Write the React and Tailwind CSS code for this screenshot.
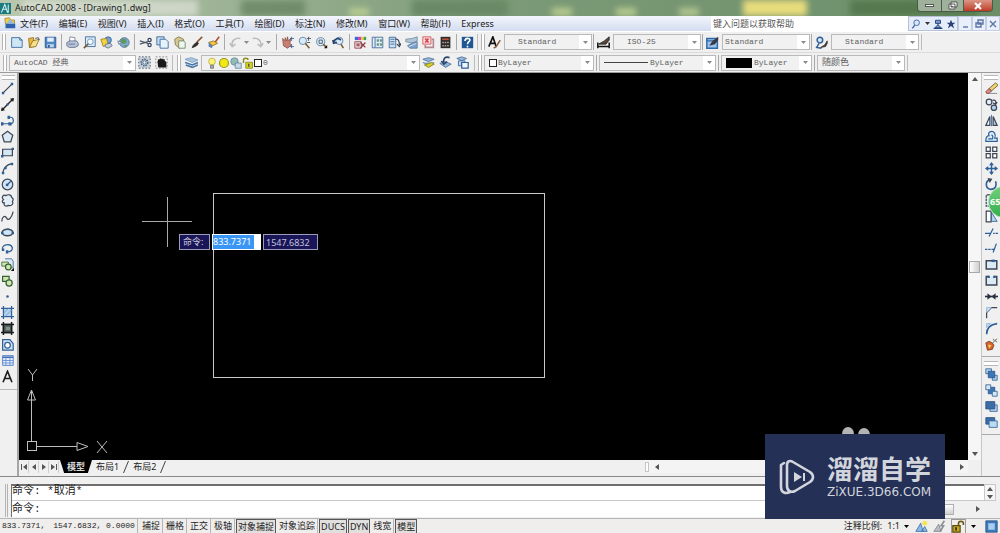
import React from "react";

const B = "#2f5f96";
const D = "#3c4654";
const L = "#b5d3ee";

// 16x16 toolbar glyphs
const ICONS = {
  // standard toolbar
  new: <path d="M2 2h10l3 3v9H2z M12 2v3h3" fill="#cfe6f5" stroke={B} />,
  open: (
    <>
      <path d="M2 3l6-1 1 11-6 1z" fill="#e8b93a" stroke="#8a6a20" />
      <path d="M3 14l4-8 8-2-4 9z" fill="#f7e08a" stroke="#8a6a20" />
      <path d="M10 3l4-1 1 3" fill="none" stroke={D} />
    </>
  ),
  save: (
    <>
      <path d="M1.5 1.5h13v13h-13z" fill="#4f86c4" stroke="#28528a" />
      <path d="M4 2h8v5H4z" fill="#e4eefa" />
      <path d="M4 10h8v4H4z" fill="#bcd3ec" />
      <path d="M5 11h2v3H5z" fill="#28528a" />
    </>
  ),
  print: (
    <>
      <path d="M5 1l6 1v5H4z" fill="#fff" stroke="#6c7890" />
      <path d="M1 8l4-2h8l2 3v3l-4 2H4l-3-2z" fill="#b9c3d8" stroke="#5d6b8c" />
      <path d="M3 10h8" stroke="#5d6b8c" />
    </>
  ),
  preview: (
    <>
      <path d="M3 1h12v12H3z" fill="#d8ebf7" stroke={B} />
      <circle cx="9" cy="7" r="3.5" fill="#f2fafe" stroke="#6288ae" />
      <path d="M6.500 9.500L1 15" stroke="#77592e" strokeWidth="2" />
    </>
  ),
  publish: (
    <>
      <circle cx="10" cy="5" r="4" fill="#6fa2d8" stroke={B} />
      <path d="M1 4l7-1 2 7-6 3z" fill="#f5d443" stroke="#9c7a1c" />
      <path d="M7 10l6-1 2 3-5 3-4-2z" fill="#c6cede" stroke="#596a86" />
    </>
  ),
  globe: (
    <>
      <circle cx="9" cy="8" r="6" fill="#7fa9d6" stroke="#4d6d92" />
      <path d="M6 3l5 1 1 4-4 2-4-3z M9 11l4 0-3 3z" fill="#5e9a5b" />
      <path d="M1 6l5 2-4 2z" fill="#e4edf5" stroke="#6b7d94" />
    </>
  ),
  cut: (
    <>
      <path d="M1 6l10 3M1 10l10-3" stroke="#4d5a6b" strokeWidth="1.500" />
      <circle cx="13" cy="5" r="2" fill="none" stroke="#31425a" strokeWidth="1.500" />
      <circle cx="13" cy="11" r="2" fill="none" stroke="#31425a" strokeWidth="1.500" />
    </>
  ),
  copy: (
    <>
      <path d="M1 1h9v10H1z" fill="#c4dcf1" stroke={B} />
      <path d="M5 4h7l3 3v8H5z" fill="#e5f1fb" stroke={B} />
    </>
  ),
  paste: (
    <>
      <path d="M2 4l5-3 6 3 1 8-6 3-5-4z" fill="#d7c890" stroke="#78704a" />
      <path d="M7 6h6l2 2v7H7z" fill="#eef6ee" stroke="#62835f" />
    </>
  ),
  brush: (
    <>
      <path d="M15 1L8 8" stroke="#8c5634" strokeWidth="2" />
      <path d="M9 7l2 2c-2 4-5 5-9 6 1-4 3-6 7-8z" fill="#33302e" />
    </>
  ),
  blockEdit: (
    <>
      <path d="M15 1l-6 8" stroke="#b04a2a" strokeWidth="2" />
      <path d="M2 8l6-2 5 3-6 3z" fill="#f4c839" stroke="#8c6c1c" />
      <path d="M2 8v5l4 2 1-3z" fill="#5b7fb4" />
    </>
  ),
  undo: <path d="M14 3C7 2 3 6 4 12M1 9l3 4 4-3" fill="none" stroke="#bcbcbc" strokeWidth="2" />,
  redo: <path d="M2 3c7-1 11 3 10 9M15 9l-3 4-4-3" fill="none" stroke="#bcbcbc" strokeWidth="2" />,
  pan: (
    <>
      <path d="M2 3l3 3V2l2 4 1-5 1 5 3-3-1 6 2 2-5 4-5-3z" fill="#c77f70" stroke="#8c5148" />
      <path d="M13 1v5M11 3h5M13 10v5M11 13h5" stroke={B} />
    </>
  ),
  zoomRt: (
    <>
      <circle cx="6" cy="6" r="4.500" fill="#d7ecfa" stroke="#53789f" />
      <path d="M9 9l5 6" stroke="#7b6035" strokeWidth="2" />
      <path d="M13 1v5M11 3h5M11 8h4" stroke={D} />
    </>
  ),
  zoomWin: (
    <>
      <circle cx="7" cy="7" r="5" fill="#d7ecfa" stroke="#53789f" />
      <path d="M5 5h4v4H5z" fill="none" stroke={D} />
      <path d="M10 10l4 4" stroke="#7b6035" strokeWidth="2" />
      <path d="M15 11v4h-4z" fill="#111" />
    </>
  ),
  zoomPrev: (
    <>
      <circle cx="9" cy="6" r="4.500" fill="#d7ecfa" stroke="#53789f" />
      <path d="M11 10l3 5" stroke="#7b6035" strokeWidth="2" />
      <path d="M2 8c1-5 6-6 9-3M1 5l1 4 4-1" fill="none" stroke="#29456c" strokeWidth="2" />
    </>
  ),
  props: (
    <>
      <path d="M1 1h4v4H1z" fill="#3c69cf" />
      <path d="M5 1h4v4H5z" fill="#d83bb8" />
      <path d="M9 1h3v4H9z" fill="#e4cd2c" />
      <path d="M12 1h3v4h-3z" fill="#3fa45a" />
      <path d="M1 7h8v8H1z" fill="#e9d9dc" stroke="#8c3a44" />
      <path d="M3 10h4M3 12h4M8 8l6 6M14 8l-6 7" stroke="#8c3a44" strokeWidth="1.500" />
    </>
  ),
  dc: (
    <>
      <path d="M1.500 1.500h13v13h-13z" fill="#e4eef8" stroke={B} />
      <path d="M5 2v12" stroke={B} />
      <path d="M7 4h3v3H7zM11 4h3v3h-3zM7 9h3v3H7zM11 9h3v3h-3z" fill="#6b9a86" />
    </>
  ),
  palettes: (
    <>
      <path d="M1.500 1.500h8v13h-8z" fill="#cfe0f2" stroke={B} />
      <path d="M3 4h5M3 7h5M3 10h5" stroke={B} />
      <path d="M9 4c4-1 5 3 5 7M11 10l3 3 2-4" fill="none" stroke={D} strokeWidth="1.500" />
    </>
  ),
  sheets: (
    <>
      <path d="M1 4l8-1 6-2v5l-5 3-9-2z" fill="#b4c6d6" stroke="#6f8aa2" />
      <path d="M3 12l7-4 5-1v8H6z" fill="#7ba3cc" stroke="#54799f" />
      <path d="M5 13l9-4" stroke="#dfe9f3" />
    </>
  ),
  markup: (
    <>
      <path d="M1 1h10v9H1z" fill="#fbdede" stroke="#d4454c" />
      <path d="M4 3l4 5M8 3L4 8" stroke="#d4454c" strokeWidth="2" />
      <path d="M12 4h2v10H4v-3" fill="none" stroke="#b58790" strokeWidth="2" />
    </>
  ),
  calc: (
    <>
      <path d="M2 1h12v14H2z" fill="#2d2a2b" />
      <path d="M4 3h8v2H4z" fill="#c0503f" />
      <path d="M4 7h2v2H4zM7 7h2v2H7zM10 7h2v2h-2zM4 11h2v2H4zM7 11h2v2H7zM10 11h2v2h-2z" fill="#a9a095" />
    </>
  ),
  help: (
    <>
      <path d="M1 1h14v14H1z" fill="#1e5791" />
      <path d="M5 6c0-4 6-4 6-1 0 2-3 2-3 5M8 12v2" fill="none" stroke="#fff" strokeWidth="2" />
    </>
  ),
  // styles toolbar
  textStyle: (
    <>
      <path d="M1 13L6 1l4 12M3 9h6" fill="none" stroke="#111" strokeWidth="2" />
      <path d="M15 5l-5 8-3 2" fill="none" stroke="#8c6040" strokeWidth="2" />
    </>
  ),
  dimStyle: (
    <>
      <path d="M1 8v7M15 8v7M1 13h14" stroke="#111" strokeWidth="1.800" />
      <path d="M15 1L9 6l-7 4 9 0 4-5z" fill="#5b4336" stroke="#222" />
    </>
  ),
  tableStyle: (
    <>
      <path d="M1 3h13v12H1z" fill="#9dc3ea" stroke="#2e68aa" strokeWidth="1.800" />
      <path d="M1 6h13" stroke="#2e68aa" strokeWidth="1.500" />
      <path d="M15 1L8 6l-4 6 7-2 4-5z" fill="#3b3a42" />
    </>
  ),
  mleader: (
    <>
      <circle cx="6" cy="5" r="3.500" fill="#cfe4f7" stroke={B} strokeWidth="1.800" />
      <path d="M5 9l-3 5 6 1" fill="none" stroke={B} strokeWidth="1.800" />
      <path d="M15 6l-3 5-5 3 6-1 2-4z" fill="#3b3330" stroke="#3b3330" />
    </>
  ),
  gear: (
    <>
      <path d="M1 1h14v14H1z" fill="#c9d3dc" stroke={D} strokeDasharray="2 2" />
      <circle cx="8" cy="8" r="4" fill="none" stroke="#4a657f" strokeWidth="2" strokeDasharray="2 1" />
      <circle cx="8" cy="8" r="2" fill="#f2f5f8" stroke="#4a657f" />
    </>
  ),
  workspace: (
    <>
      <path d="M1 1h14v14H1z" fill="none" stroke="#777" strokeDasharray="2 2" />
      <path d="M3 7l1-3h2V3h2v1l2-1v1h2v2l2 1v7H4z" fill="#191919" />
    </>
  ),
  layers: (
    <>
      <path d="M0 4l8-2 8 3-7 3z" fill="#a9c5e0" stroke="#7a9cc0" />
      <path d="M0 8l9 3 7-3M1 11l8 3 7-3" fill="none" stroke="#4a78ab" strokeWidth="2" />
    </>
  ),
  bulb: (
    <>
      <circle cx="8" cy="6" r="4.500" fill="#fbf27a" stroke="#b6a834" />
      <path d="M6 11h4v4H6z" fill="#a8abb0" stroke="#686c74" />
    </>
  ),
  sun: <circle cx="8" cy="8" r="6" fill="#f3e816" stroke="#8f9a18" strokeWidth="1.500" />,
  vpFreeze: (
    <>
      <circle cx="6" cy="6" r="5" fill="#95b9b8" stroke="#5f8c92" />
      <path d="M7 8h8v7H7z" fill="#c7dae6" stroke="#5f7f9c" />
    </>
  ),
  lockSm: (
    <>
      <path d="M2 8V4c0-3 6-3 6 0" fill="none" stroke="#8f8f1b" strokeWidth="2" />
      <path d="M5 7h9v8H5z" fill="#d4d21f" stroke="#80801b" />
      <path d="M9 9v4" stroke="#555" strokeWidth="2" />
    </>
  ),
  layMake: (
    <>
      <path d="M1 4l7-2 7 2-7 3z M1 8l7 3 7-3" fill="#93b5d6" stroke="#4c719b" />
      <path d="M3 11l5 3 7-4-3-2z" fill="#d9d12c" stroke="#78761a" />
    </>
  ),
  layPrev: (
    <>
      <path d="M1 9l7-2 7 3-7 4z" fill="#93b5d6" stroke="#4c719b" />
      <path d="M13 2C8 0 5 3 6 8M3 6l3 4 4-3" fill="none" stroke="#2c466c" strokeWidth="2" />
    </>
  ),
  layState: (
    <>
      <path d="M1 3l6-2 6 2-6 3z" fill="#93b5d6" stroke="#4c719b" />
      <path d="M3 6h8v6H3z" fill="#c0d9f0" stroke={B} />
      <path d="M7 8h8v7H7z" fill="#eef6fd" stroke={B} strokeWidth="1.500" />
    </>
  ),
  // draw toolbar
  line: (
    <>
      <path d="M2 14L14 2" stroke={D} strokeWidth="1.500" />
      <path d="M1 12h3v3H1zM12 1h3v3h-3z" fill={B} />
    </>
  ),
  xline: (
    <>
      <path d="M1 15L15 1" stroke="#222" strokeWidth="1.600" />
      <path d="M0 16l1-5 4 4zM16 0l-5 1 4 4z" fill="#222" />
      <circle cx="8" cy="8" r="1.500" fill={B} />
    </>
  ),
  pline: (
    <>
      <path d="M1 12h12c3-1 3-8-1-8H9" fill="none" stroke={B} strokeWidth="1.500" />
      <path d="M0 10h3v4H0zM9 10h4v4H9zM8 2h3v4H8z" fill={B} />
    </>
  ),
  polygon: <path d="M8 1.500l6.500 5-2.500 8H4l-2.500-8z" fill="#dbe9f5" stroke={D} strokeWidth="1.500" />,
  rect: (
    <>
      <path d="M2 4h12v8H2z" fill="#d5e6f5" stroke={D} strokeWidth="1.500" />
      <path d="M0 11h3v3H0zM13 2h3v3h-3z" fill={B} />
    </>
  ),
  arc: (
    <>
      <path d="M2 14C3 7 7 3 14 2" fill="none" stroke={D} strokeWidth="1.500" />
      <path d="M1 12h3v3H1zM4 6h3v3H4zM12 1h3v3h-3z" fill={B} />
    </>
  ),
  circle: (
    <>
      <circle cx="8" cy="8" r="6.500" fill="#d3e6f7" stroke={D} strokeWidth="1.500" />
      <path d="M8 8l4-4" stroke={B} strokeWidth="1.500" />
      <path d="M6 7h3v3H6z" fill={B} />
    </>
  ),
  revcloud: (
    <path
      d="M3 7C0 4 3 0 6 2c3-2 7-1 7 2 3 2 2 4 1 5 2 4-2 6-5 5-3 2-6 0-5-3-3 0-3-3-1-4z"
      fill="#e3edf6"
      stroke={D}
      strokeWidth="1.500"
    />
  ),
  spline: <path d="M1 14c0-6 4-8 6-4s6 0 8-8" fill="none" stroke={D} strokeWidth="1.500" />,
  ellipse: (
    <>
      <ellipse cx="8" cy="8" rx="6.500" ry="4" fill="#cfe4f7" stroke={D} strokeWidth="1.800" />
      <path d="M0 7h3v3H0zM13 7h3v3h-3zM7 3h3v2H7z" fill={B} />
    </>
  ),
  ellArc: (
    <>
      <path d="M2 9C0 3 12 1 14 7c0 4-3 5-6 5" fill="none" stroke={B} strokeWidth="1.500" />
      <path d="M6 10h3v4H6zM1 8h3v3H1z" fill={B} />
    </>
  ),
  insert: (
    <>
      <path d="M5 1h8l2 3v8h-4" fill="#dceaf8" stroke={B} />
      <path d="M1 5h8v5H1z" fill="#cfe7b7" stroke="#38622d" />
      <circle cx="9" cy="11" r="3.500" fill="#cfe7b7" stroke="#38622d" strokeWidth="1.500" />
      <path d="M16 12v4h-4z" fill="#111" />
    </>
  ),
  block: (
    <>
      <path d="M2 3h8v6H2z" fill="#cfe7b7" stroke="#38622d" strokeWidth="1.500" />
      <circle cx="10" cy="11" r="3.800" fill="#cfe7b7" stroke="#38622d" strokeWidth="1.500" />
    </>
  ),
  point: <circle cx="8" cy="8" r="1.600" fill={B} />,
  hatch: (
    <>
      <path d="M3 3h10v10H3z" fill={L} />
      <path d="M3 0v16M13 0v16M0 3h16M0 13h16" stroke={B} strokeWidth="1.500" />
      <path d="M3 9l6-6M5 13l8-8" stroke="#6c9ac9" />
    </>
  ),
  gradient: (
    <>
      <path d="M2 2h12v12H2z" fill="#545f60" />
      <path d="M3 0v16M13 0v16M0 3h16M0 13h16" stroke="#171b1e" strokeWidth="1.800" />
      <path d="M6 6h5v4H6z" fill="#829488" />
    </>
  ),
  region: (
    <>
      <path d="M2 2h9l4 5v8H2z" fill="#cfe4f7" stroke={B} strokeWidth="1.500" />
      <circle cx="8" cy="9" r="3.500" fill="#fff" stroke={B} strokeWidth="1.500" />
    </>
  ),
  table: (
    <>
      <path d="M2 2h13v12H2z" fill="#e8f1fc" stroke="#416fc0" />
      <path d="M2 3h13v2H2z" fill="#416fc0" />
      <path d="M2 8h13M2 11h13M6 4v10M11 4v10" stroke="#5b86cf" />
    </>
  ),
  mtext: <path d="M2.500 15L8 1.500 13.500 15M4.500 10.500h7" fill="none" stroke="#1d1d1d" strokeWidth="2" />,
  // modify toolbar
  erase: (
    <>
      <path d="M5 8l8-7 3 3-8 7z" fill="#f1d36b" stroke="#5d5340" />
      <path d="M5 8l3 3-3 3H2l-1-2z" fill="#d98a86" stroke="#7a3a3a" />
      <path d="M5 14h10" stroke="#777" />
    </>
  ),
  copyObj: (
    <>
      <circle cx="5" cy="5" r="3.500" fill="#e4eef8" stroke={D} strokeWidth="1.500" />
      <circle cx="11" cy="12" r="3.300" fill={L} stroke={D} strokeWidth="1.500" />
      <path d="M9 3c4-1 5 1 4 4M10 6l3 2 2-3" fill="none" stroke={D} strokeWidth="1.500" />
    </>
  ),
  mirror: (
    <>
      <path d="M6 3v11H1z" fill="#fff" stroke={D} strokeWidth="1.500" />
      <path d="M10 3v11h5z" fill={L} stroke={D} strokeWidth="1.500" />
      <path d="M8 1v14" stroke={B} />
    </>
  ),
  offset: (
    <>
      <path d="M1 14h14v-4h-3c2-5-1-9-5-8-3 1-3 3-2 5-3 0-4 3-4 7z" fill="#dcebf8" stroke={B} strokeWidth="1.500" />
      <path d="M4 11h5c1-2 1-4-1-5" fill="none" stroke={B} strokeWidth="1.500" />
    </>
  ),
  array: (
    <path d="M1.500 1.500h5v5h-5zM9.500 1.500h5v5h-5zM1.500 9.500h5v5h-5zM9.500 9.500h5v5h-5z" fill="#fff" stroke={D} strokeWidth="1.500" />
  ),
  move: (
    <>
      <path d="M8 2v12M2 8h12" stroke={B} strokeWidth="1.800" />
      <path d="M8 0l3 4H5zM8 16l3-4H5zM0 8l4-3v6zM16 8l-4-3v6z" fill={B} />
    </>
  ),
  rotate: (
    <>
      <path d="M6 2C0 4 0 13 7 14c6 0 8-5 6-10" fill="none" stroke={B} strokeWidth="2" />
      <path d="M3 0l6 1-3 5z" fill={D} />
    </>
  ),
  scale: <path d="M5 1H1.500v14H15V8H8V1z" fill="#e8eef5" stroke={D} strokeWidth="1.500" strokeDasharray="3 1" />,
  stretch: (
    <>
      <path d="M1.500 1.500h6v13h-6z" fill="#fff" stroke={D} strokeWidth="1.500" />
      <path d="M8 3l7 11H8z" fill={L} stroke={B} />
    </>
  ),
  trim: (
    <>
      <path d="M0 9h7M10 9h2M13 9h3" stroke={B} strokeWidth="1.500" />
      <path d="M5 13L10 3" stroke={B} strokeWidth="1.500" />
    </>
  ),
  extend: (
    <>
      <path d="M0 9h3M4 9h3M8 9h4" stroke={B} strokeWidth="1.500" />
      <path d="M10 13l4-11" stroke={B} strokeWidth="1.500" />
    </>
  ),
  breakPt: (
    <>
      <path d="M1.500 3.500h13v10h-13z" fill="#dceaf6" stroke={D} strokeWidth="1.800" />
      <path d="M8 2h4v3H8z" fill={B} />
    </>
  ),
  breakObj: (
    <>
      <path d="M5 3H1.500v10.500h13V3H11" fill="#dceaf6" stroke={D} strokeWidth="1.800" />
      <path d="M3 2h3v3H3zM10 2h3v3h-3z" fill={B} />
    </>
  ),
  join: (
    <>
      <path d="M0 8h16" stroke="#26303e" strokeWidth="2" />
      <path d="M3 4l5 4-5 4zM13 4L8 8l5 4z" fill="#26303e" />
    </>
  ),
  chamfer: (
    <>
      <path d="M2 15V8l6-6h7" fill="none" stroke={D} strokeWidth="1.500" />
      <path d="M2 8V2h6z" fill="#cfe2f3" stroke="#88add3" />
    </>
  ),
  fillet: (
    <>
      <path d="M2 15C2 7 6 3 15 2" fill="none" stroke={B} strokeWidth="2" />
      <path d="M2 7V2h5z" fill="#cfe2f3" stroke="#88add3" />
    </>
  ),
  explode: (
    <>
      <path d="M1 6l4-2 4 2 2 3-2 5-6 1z" fill="#d9622c" stroke="#7d3a22" />
      <path d="M4 8l4 1-3 4z" fill="#f7dc64" />
      <path d="M9 7l3-4M12 3l3-2M12 3l3 2M11 3l-1-2" stroke="#555" />
    </>
  ),
  front: (
    <>
      <path d="M1 1h7v6H1zM9 9h6v6H9z" fill={L} stroke={B} />
      <path d="M4 4h8v8H4z" fill="#3d76b5" stroke="#28558a" />
    </>
  ),
  back: (
    <>
      <path d="M4 4h8v8H4z" fill="#3d76b5" stroke="#28558a" />
      <path d="M1 1h6v6H1zM9 9h6v6H9z" fill="#d6e7f7" stroke={B} />
    </>
  ),
  above: (
    <>
      <path d="M6 6h9v8H6z" fill={L} stroke={B} />
      <path d="M1 2h11v9H1z" fill="#3d6da6" stroke="#284f80" />
    </>
  ),
  under: (
    <>
      <path d="M1 2h11v8H1z" fill="#3d6da6" stroke="#284f80" />
      <path d="M5 6h10v8H5z" fill="#b9dcf2" stroke={B} />
    </>
  ),
  // info center and status tray
  search: (
    <>
      <circle cx="9" cy="6" r="4.500" fill="#d7e8fa" stroke="#4267a3" strokeWidth="1.500" />
      <path d="M6 10l-4 5" stroke="#4267a3" strokeWidth="2" />
    </>
  ),
  comm: (
    <>
      <path d="M4 2h8v5H4zM8 7v3M3 14l5-5 5 5z" fill="#7f9bc9" stroke="#27447b" strokeWidth="1.500" />
      <path d="M1 15h14" stroke="#27447b" strokeWidth="2" />
    </>
  ),
  star: <path d="M8 1l2 5h5l-4 3 2 6-5-4-5 4 2-6-4-3h5z" fill="#27447b" />,
  annoVis: (
    <>
      <path d="M1 14L7 4l3 10zM8 14l4-6 3 6z" fill="#8db8e5" stroke="#3a6da8" />
      <circle cx="12" cy="4" r="3" fill="#f4e74b" />
    </>
  ),
  annoAuto: (
    <>
      <path d="M1 14L7 5l3 9z" fill="#b8bcc4" stroke="#80858e" />
      <path d="M14 1l-4 6h3l-4 7" fill="none" stroke="#8c8f94" strokeWidth="2" />
    </>
  ),
  padlock: (
    <>
      <path d="M8 7V4c0-3 6-3 6 0v2" fill="none" stroke="#6d5a12" strokeWidth="2" />
      <path d="M1 7h9v8H1z" fill="#c2a823" stroke="#5c4b0d" strokeWidth="1.500" />
      <path d="M5 9v4" stroke="#2c2507" strokeWidth="2" />
    </>
  ),
  clean: (
    <>
      <path d="M1 1h14v14H1z" fill="#3d78b8" stroke="#2b5587" />
      <path d="M4 4h8v8H4z" fill="#a8cff1" />
    </>
  ),
};

function Glyph({ name, className = "size-[13px]" }) {
  return (
    <svg viewBox="0 0 16 16" className={`shrink-0 ${className}`} fill="none" aria-hidden="true">
      {ICONS[name]}
    </svg>
  );
}

function Tool({ name, className = "w-[17px] h-4" }) {
  return (
    <button type="button" aria-label={name} className={`flex shrink-0 items-center justify-center ${className}`}>
      <Glyph name={name} />
    </button>
  );
}

function Sep() {
  return <span className="h-4 w-px shrink-0 bg-[#a9a9a9]" />;
}

function Grip() {
  return <span className="h-4 w-[4px] shrink-0 border-x border-[#b4b4b4] bg-white" />;
}

function Caret({ className = "text-[#8a8a8a]" }) {
  return (
    <svg viewBox="0 0 5 3" className={`h-[3px] w-[5px] shrink-0 ${className}`} aria-hidden="true">
      <path d="M0 0h5L2.500 3z" fill="currentColor" />
    </svg>
  );
}

function Combo({ label, value, className, pad, children }) {
  return (
    <div className={`relative flex h-4 shrink-0 border border-[#b9b9b9] bg-[#f1f1f1] ${className}`}>
      <select
        aria-label={label}
        className={`w-full appearance-none font-['Liberation_Mono','Noto_Sans_CJK_SC',monospace] text-[8px] leading-[14px] text-[#5f5f5f] ${pad}`}
      >
        <option>{value}</option>
      </select>
      <div className="pointer-events-none absolute inset-y-0 left-1 flex items-center">{children}</div>
      <div className="pointer-events-none absolute inset-y-0 right-0 flex w-3 items-center justify-center bg-white">
        <Caret />
      </div>
    </div>
  );
}

const MENUS = [
  "文件(F)",
  "编辑(E)",
  "视图(V)",
  "插入(I)",
  "格式(O)",
  "工具(T)",
  "绘图(D)",
  "标注(N)",
  "修改(M)",
  "窗口(W)",
  "帮助(H)",
  "Express",
];

const STANDARD = [
  ["new", "open", "save"],
  ["print", "preview", "publish", "globe"],
  ["cut", "copy", "paste", "brush", "blockEdit"],
];
const VIEW = ["pan", "zoomRt", "zoomWin", "zoomPrev"];
const PALETTES = ["props", "dc", "palettes", "sheets", "markup", "calc"];

const DRAW = [
  "line", "xline", "pline", "polygon", "rect", "arc", "circle", "revcloud", "spline", "ellipse",
  "ellArc", "insert", "block", "point", "hatch", "gradient", "region", "table", "mtext",
];
const MODIFY = [
  "erase", "copyObj", "mirror", "offset", "array", "move", "rotate", "scale", "stretch",
  "trim", "extend", "breakPt", "breakObj", "join", "chamfer", "fillet", "explode",
];
const ORDER = ["front", "back", "above", "under"];

const MODES = [
  ["捕捉", false],
  ["栅格", false],
  ["正交", false],
  ["极轴", false],
  ["对象捕捉", true],
  ["对象追踪", false],
  ["DUCS", true],
  ["DYN", true],
  ["线宽", false],
  ["模型", true],
];

function TitleBar() {
  return (
    <header className="relative flex h-4 shrink-0 items-center overflow-hidden bg-linear-to-r from-[#b9c8ae] via-[#7c9a77] to-[#6c8f6a]">
      <div className="absolute inset-0 flex justify-around blur-[3px]">
        <span className="w-44 bg-[#dfe4da]/70" />
        <span className="w-16 bg-[#5f7f5c]/70" />
        <span className="mt-2 w-5 bg-[#b9cc92]" />
        <span className="w-24 bg-[#688a66]" />
        <span className="mt-2 w-5 bg-[#b9cc92]" />
        <span className="mt-2 w-5 bg-[#b9cc92]" />
        <span className="mt-2 w-5 bg-[#b4c690]" />
        <span className="w-16 bg-[#e8dc7c]" />
        <span className="w-32 bg-[#56794f]" />
      </div>
      <svg viewBox="0 0 16 16" className="relative size-[11px] shrink-0" aria-hidden="true">
        <path d="M0 0h16v16H0z" fill="#1b7a80" />
        <path d="M2 14L7 2l4 12M4 9h6M12 2v12" stroke="#d9f4f2" strokeWidth="1.500" fill="none" />
      </svg>
      <h1 className="relative ml-1 flex-1 text-[9px] leading-4 text-[#1c1c1c]">AutoCAD 2008 - [Drawing1.dwg]</h1>
      <div className="relative mr-[7px] flex h-3 self-start overflow-hidden rounded-b-sm border border-t-0 border-[#4c5a4a]">
        <button type="button" aria-label="最小化" className="flex w-6 items-center justify-center border-r border-[#4c5a4a] bg-[#9fb09b]">
          <span className="h-[3px] w-[9px] border border-[#555] bg-white" />
        </button>
        <button type="button" aria-label="还原" className="flex w-[22px] items-center justify-center border-r border-[#4c5a4a] bg-[#9fb09b]">
          <svg viewBox="0 0 10 9" className="h-[9px] w-[10px]" aria-hidden="true">
            <path d="M3 1h6v5H3zM1 3h6v5H1z" fill="#fff" stroke="#555" />
            <path d="M3 5h2v1H3z" fill="#555" />
          </svg>
        </button>
        <button type="button" aria-label="关闭" className="flex w-7 items-center justify-center bg-linear-to-b from-[#dc9484] to-[#bb3a24]">
          <svg viewBox="0 0 8 8" className="size-2" aria-hidden="true">
            <path d="M1 1l6 6M7 1L1 7" stroke="#fff" strokeWidth="2" />
          </svg>
        </button>
      </div>
    </header>
  );
}

function MenuBar() {
  return (
    <nav className="flex h-[15px] shrink-0 items-stretch bg-linear-to-b from-[#f3f6fc] to-[#d3dcf0]">
      <svg viewBox="0 0 16 16" className="mt-px ml-1 size-3 shrink-0" aria-hidden="true">
        <path d="M1 2l6-1 2 3h5v5H2z" fill="#f1cf4a" stroke="#9b8030" />
        <path d="M2 9h13v6H2z" fill="#2f62ad" />
        <path d="M3 9l5-6 6 6z" fill="#8fb9e6" />
      </svg>
      <div className="ml-1 flex w-[474px] items-center justify-between">
        {MENUS.map((m) => (
          <button key={m} type="button" className="shrink-0 text-[9px] leading-[15px] text-[#1a1a1a]">
            {m}
          </button>
        ))}
      </div>
      <input
        aria-label="帮助搜索"
        placeholder="键入问题以获取帮助"
        className="ml-auto w-[197px] bg-white pl-[2px] text-[9px] leading-[15px] placeholder:text-[#555]"
      />
      <div className="flex items-center border border-[#b7c2d8] bg-[#e6edfa]">
        <button type="button" aria-label="搜索" className="flex w-[22px] items-center justify-center gap-1">
          <Glyph name="search" className="size-[10px]" />
          <Caret className="text-[#333]" />
        </button>
        <button type="button" aria-label="通讯中心" className="flex w-[14px] justify-center">
          <Glyph name="comm" className="size-[10px]" />
        </button>
        <button type="button" aria-label="收藏夹" className="flex w-3 justify-center">
          <Glyph name="star" className="size-[10px]" />
        </button>
      </div>
      <div className="flex bg-[#dbe4f5]">
        {["M2 8h5", "M3 1h5v4H3zM1 4h5v4H1z", "M1 2l6 6M7 2L1 8"].map((d, i) => (
          <button
            key={d}
            type="button"
            aria-label={["最小化图形", "还原图形", "关闭图形"][i]}
            className="flex w-[14px] items-center justify-center border border-[#c3cee4] bg-[#eaf0fb]"
          >
            <svg viewBox="0 0 9 9" className="size-[9px]" aria-hidden="true">
              <path d={d} stroke="#5b76a6" strokeWidth="1.400" fill="none" />
            </svg>
          </button>
        ))}
      </div>
    </nav>
  );
}

function Toolbars() {
  return (
    <div className="shrink-0 border-b border-[#9c9c9c] bg-[#f0f0f0]">
      <div className="flex h-[21px] items-center border-t border-white">
        <div className="flex items-center gap-[2px] border-r border-[#bdbdbd] pr-px pl-[2px]">
          <Grip />
          {STANDARD.map((group) => (
            <React.Fragment key={group[0]}>
              <div className="flex">
                {group.map((n) => (
                  <Tool key={n} name={n} />
                ))}
              </div>
              <Sep />
            </React.Fragment>
          ))}
          <div className="flex items-center">
            <Tool name="undo" />
            <Caret />
            <Tool name="redo" />
            <Caret />
          </div>
          <span className="w-px" />
          <Sep />
          <div className="flex">
            {VIEW.map((n) => (
              <Tool key={n} name={n} />
            ))}
          </div>
          <Sep />
          <div className="flex">
            {PALETTES.map((n) => (
              <Tool key={n} name={n} />
            ))}
          </div>
          <Sep />
          <Tool name="help" />
        </div>
        <div className="flex items-center gap-px border-r border-[#bdbdbd] pr-[2px] pl-[3px]">
          <Grip />
          <Tool name="textStyle" />
          <Combo label="文字样式" value="Standard" className="w-[88px]" pad="pl-[13px]" />
          <Sep />
          <Tool name="dimStyle" />
          <Combo label="标注样式" value="ISO-25" className="w-[88px]" pad="pl-[13px]" />
          <Sep />
          <Tool name="tableStyle" />
          <Combo label="表格样式" value="Standard" className="w-[88px]" pad="pl-[2px]" />
          <Sep />
          <Tool name="mleader" />
          <Combo label="多重引线样式" value="Standard" className="w-[88px]" pad="pl-[13px]" />
        </div>
      </div>

      <div className="flex h-5 items-center border-t border-[#dcdcdc]">
        <div className="flex items-center border-r border-[#bdbdbd] pr-[2px] pl-[3px]">
          <Grip />
          <span className="w-[2px]" />
          <Combo label="工作空间" value="AutoCAD 经典" className="w-[127px]" pad="pl-1" />
          <Tool name="gear" />
          <Tool name="workspace" />
        </div>
        <div className="flex items-center border-r border-[#bdbdbd] pr-[3px] pl-1">
          <Grip />
          <span className="w-[2px]" />
          <Tool name="layers" />
          <Combo label="图层" value="0" className="ml-px w-[219px]" pad="pl-[61px]">
            <Glyph name="bulb" className="size-3" />
            <Glyph name="sun" className="size-3" />
            <Glyph name="vpFreeze" className="size-3" />
            <Glyph name="lockSm" className="size-3" />
            <span className="size-2 border border-[#222] bg-white" />
          </Combo>
          <Tool name="layMake" />
          <Tool name="layPrev" />
          <Tool name="layState" />
        </div>
        <div className="flex items-center gap-[2px] border-r border-[#bdbdbd] pr-[2px] pl-[3px]">
          <Grip />
          <Combo label="颜色" value="ByLayer" className="w-[110px]" pad="pl-[13px]">
            <span className="size-2 border border-[#222] bg-white" />
          </Combo>
          <Sep />
          <Combo label="线型" value="ByLayer" className="w-[117px]" pad="pl-[50px]">
            <span className="h-px w-11 bg-[#444]" />
          </Combo>
          <Sep />
          <Combo label="线宽" value="ByLayer" className="w-[91px]" pad="pl-[32px]">
            <span className="h-[10px] w-[26px] bg-black" />
          </Combo>
          <Sep />
          <Combo label="打印样式" value="随颜色" className="w-[88px]" pad="pl-1 text-[9px]" />
        </div>
      </div>
    </div>
  );
}

function SideGrip() {
  return <span className="mx-[2px] h-[5px] shrink-0 border-y border-[#b8b8b8] bg-white" />;
}

function Drawing() {
  return (
    <svg width="100%" height="100%" className="absolute inset-0" fill="none" shapeRendering="crispEdges" aria-hidden="true">
      <path d="M194.500 120.500h331v184h-331z" stroke="#c9c9c9" />
      <path d="M123 148.500h50M148.500 124v50" stroke="#a9a9a9" />
      <g stroke="#bdbdbd">
        <path d="M8.500 368.500h9v9h-9zM12.500 368V327M18 373.500h40" />
        <g shapeRendering="auto">
          <path d="M12.500 317l-4 10h8zM12.500 318v9M69 373.500l-11-4v8z" />
          <path d="M9 296l4.500 6 4.500-6M13.500 302v6M78 368l10 12M88 368L78 380" />
        </g>
      </g>
      <g fill="#b4b4b4" shapeRendering="auto">
        <ellipse cx="829" cy="361" rx="6" ry="7" />
        <ellipse cx="845" cy="362" rx="6" ry="7" />
      </g>
    </svg>
  );
}

function DynInput() {
  return (
    <div className="absolute top-[161px] left-[160px] flex gap-[2px] font-['Noto_Sans','Noto_Sans_CJK_SC',sans-serif] text-[9px] leading-[14px]">
      <label htmlFor="dyn-x" className="w-[31px] border border-[#9c9cba] bg-[#1a1556] pl-[3px] text-[#cfcfe0]">
        命令:
      </label>
      <div className="flex w-[49px] border border-white bg-white">
        <input
          id="dyn-x"
          defaultValue="833.7371"
          className="h-[14px] w-[41px] bg-[#3996f5] text-white"
        />
      </div>
      <input
        aria-label="Y"
        defaultValue="1547.6832"
        className="h-4 w-[55px] border border-[#9c9cba] bg-[#1a1556] pl-[2px] text-[#c3c3dc]"
      />
    </div>
  );
}

function Arrow({ d }) {
  return (
    <svg viewBox="0 0 8 8" className="size-2 shrink-0" fill="#555" stroke="none" aria-hidden="true">
      <path d={d} />
    </svg>
  );
}

function LayoutTabs() {
  const nav = ["M1 1h1v6H1zM7 1v6L3 4z", "M6 1v6L2 4z", "M2 1v6l4-3z", "M6 1h1v6H6zM1 1v6l4-3z"];
  return (
    <div className="mb-[3px] flex h-[13px] shrink-0 items-center bg-[#f0f0f0] text-[9px] leading-[13px] text-[#222]">
      {nav.map((d, i) => (
        <button
          key={d}
          type="button"
          aria-label={["第一个", "上一个", "下一个", "最后一个"][i]}
          className="flex h-3 w-[10px] shrink-0 items-center justify-center border-r border-[#cfcfcf]"
        >
          <Arrow d={d} />
        </button>
      ))}
      <button
        type="button"
        className="ml-px bg-black px-[7px] font-bold text-[#d8d8d8] [clip-path:polygon(0_0,100%_0,87%_100%,13%_100%)]"
      >
        模型
      </button>
      {["布局1", "布局2"].map((t) => (
        <div key={t} className="flex items-center">
          <button type="button" className="px-1">
            {t}
          </button>
          <svg viewBox="0 0 6 12" className="h-3 w-[6px]" aria-hidden="true">
            <path d="M5.500 0L.5 12" stroke="#444" />
          </svg>
        </div>
      ))}
      {/* horizontal scroll bar */}
      <div className="ml-auto flex h-full w-[34%] items-center justify-between bg-[#f4f4f4] pr-[2px]">
        <div className="flex items-center gap-1">
          <span className="h-[10px] w-1 border border-[#c4c4c4] bg-white" />
          <Arrow d="M6 1v6L2 4z" />
        </div>
        <Arrow d="M2 1v6l4-3z" />
      </div>
    </div>
  );
}

function Workspace() {
  return (
    <main className="flex min-h-0 flex-1 bg-[#f0f0f0]">
      <aside className="w-[19px] shrink-0 border-r-2 border-[#a5a5a5]">
        <div className="flex flex-col items-stretch border-b border-[#bbb] pt-[2px] pb-[5px]">
          <SideGrip />
          {DRAW.map((n) => (
            <Tool key={n} name={n} className="h-4 w-[15px]" />
          ))}
        </div>
      </aside>
      <section className="flex min-w-0 flex-1 flex-col">
        <div className="relative min-h-0 flex-1 overflow-hidden bg-black">
          <Drawing />
          <DynInput />
        </div>
        <LayoutTabs />
      </section>
      {/* vertical scroll bar */}
      <div className="mb-4 flex w-[13px] shrink-0 flex-col items-center justify-between bg-[#f6f6f6] py-[2px]">
        <Arrow d="M1 6h6L4 2z" />
        <span className="h-3 w-[11px] border border-[#a9a9a9] bg-linear-to-r from-white to-[#cfcfcf]" />
        <Arrow d="M1 2h6L4 6z" />
      </div>
      <aside className="relative w-[19px] shrink-0 border-l border-[#c6c6c6]">
        <div className="flex flex-col border-b border-[#aaa] pt-[2px] pb-1">
          <SideGrip />
          {MODIFY.map((n) => (
            <Tool key={n} name={n} className="h-4 w-[18px]" />
          ))}
        </div>
        <div className="flex flex-col border-b border-[#aaa] pt-1 pb-1">
          <SideGrip />
          {ORDER.map((n) => (
            <Tool key={n} name={n} className="h-4 w-[18px]" />
          ))}
        </div>
        <div className="absolute top-[113px] left-[6px] w-3 overflow-hidden">
          <div className="flex size-8 items-center rounded-full border border-[#aee0b0] bg-linear-to-b from-[#6fd07a] to-[#2fae4c] pl-px text-[9px] font-bold text-white">
            65
          </div>
        </div>
      </aside>
    </main>
  );
}

function CommandLine() {
  return (
    <section className="shrink-0 border-t border-[#8a8a8a] bg-[#f0f0f0] pt-[7px]">
      <div className="flex h-[34px] pb-px pl-[5px] font-['Liberation_Mono','Noto_Sans_CJK_SC',monospace] text-[11px] text-[#222]">
        <span className="mr-[3px] w-[3px] border-x border-[#b4b4b4]" />
        <div className="flex min-w-0 flex-1 flex-col border-t-2 border-l border-[#6f6f6f] bg-white">
          <p className="h-[15px] border-b border-[#c9c9c9] leading-[11px]">命令: *取消*</p>
          <div className="flex h-4 items-center">
            <label htmlFor="cmd" className="leading-4">
              命令:
            </label>
            <input id="cmd" className="ml-1 h-4 min-w-0 flex-1" />
            <div className="flex h-full items-center gap-5 bg-[#f0f0f0] pr-[2px]">
              <span className="h-[11px] w-3 border border-[#b0b0b0] bg-linear-to-b from-white to-[#cfcfcf]" />
              <Arrow d="M2 1v6l4-3z" />
            </div>
          </div>
        </div>
        <div className="mr-1 flex h-[17px] w-3 flex-col items-center justify-between border border-[#c8c8c8] bg-[#f6f6f6]">
          <Arrow d="M1 6h6L4 2z" />
          <Arrow d="M1 2h6L4 6z" />
        </div>
      </div>
    </section>
  );
}

function StatusBar() {
  return (
    <footer className="flex h-[15px] shrink-0 items-center border-t border-[#b5b5b5] bg-[#f0eded] text-[9px] leading-[14px] text-[#1c1c1c]">
      <div className="flex h-full w-[138px] shrink-0 items-center gap-2 border-r border-[#b5b5b5] pl-[2px] font-['Liberation_Mono',monospace] text-[8px]">
        <span>833.7371,</span>
        <span>1547.6832, 0.0000</span>
      </div>
      <div className="ml-[2px] flex h-full items-stretch gap-px">
        {MODES.map(([name, on]) =>
          on ? (
            <button key={name} type="button" aria-pressed="true" className="border border-b-0 border-[#555] bg-[#e2dfdf] px-px">
              {name}
            </button>
          ) : (
            <button key={name} type="button" aria-pressed="false" className="border-r border-[#b5b5b5] px-[2px]">
              {name}
            </button>
          )
        )}
      </div>
      <div className="ml-auto flex items-center gap-[5px] pr-[2px]">
        <span>注释比例:</span>
        <button type="button" className="mr-px flex items-center gap-1">
          1:1
          <Caret className="text-black" />
        </button>
        <Tool name="annoVis" className="w-[13px]" />
        <Tool name="annoAuto" className="w-[13px]" />
        <Tool name="padlock" className="w-[15px] border border-b-0 border-[#999]" />
        <Caret className="text-black" />
        <Tool name="clean" className="ml-1 w-[13px]" />
      </div>
    </footer>
  );
}

function Badge() {
  return (
    <div className="absolute right-[55px] bottom-[14px] flex h-[85px] w-[180px] items-center gap-3 bg-[#243056] pl-[14px] text-[#d3d5dc]">
      <svg viewBox="0 0 36 36" className="size-9 shrink-0" fill="none" stroke="#d3d5dc" strokeWidth="2.600" aria-hidden="true">
        <path d="M2 6v22c0 6 5 7 9 5M2 6l3-2" strokeLinecap="round" />
        <path d="M8 27V6c0-4 3-5 6-3l17 10c4 3 4 7 0 10L16 32c-4 2-8 0-8-5" strokeLinecap="round" strokeLinejoin="round" />
        <path d="M15 13l8 5-8 5z" fill="#d3d5dc" stroke="none" />
        <path d="M25 14v8" strokeWidth="2" />
      </svg>
      <div className="shrink-0 whitespace-nowrap">
        <p className="font-['Liberation_Sans','Noto_Sans_CJK_SC',sans-serif] text-[26px] leading-[30px] font-bold">溜溜自学</p>
        <p className="font-['DejaVu_Sans',sans-serif] text-[12px] leading-[14px]">ZiXUE.3D66.COM</p>
      </div>
    </div>
  );
}

export default function App() {
  return (
    <div className="relative flex h-screen flex-col overflow-hidden bg-[#f0f0f0] font-['Noto_Sans','Noto_Sans_CJK_SC',sans-serif]">
      <TitleBar />
      <MenuBar />
      <Toolbars />
      <Workspace />
      <CommandLine />
      <StatusBar />
      <Badge />
    </div>
  );
}
